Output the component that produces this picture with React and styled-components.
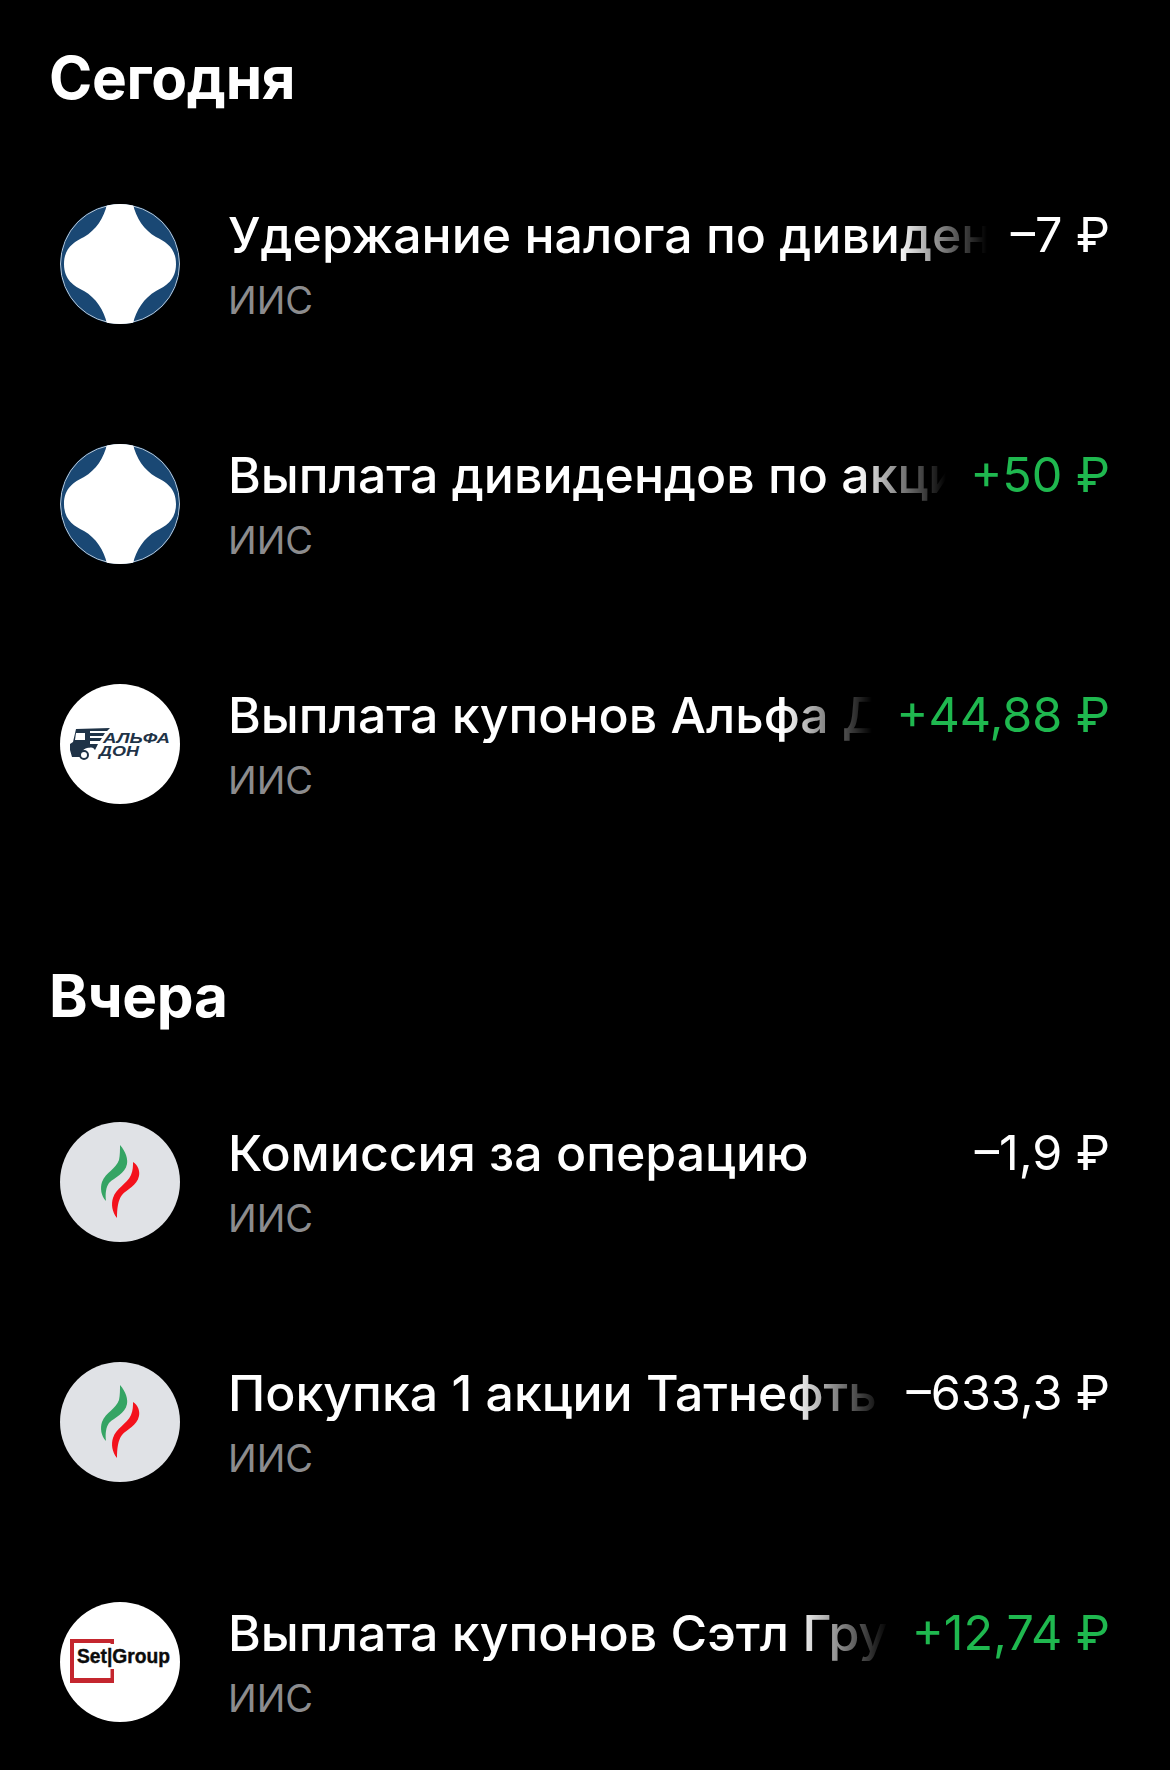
import React from "react";
import styled, { createGlobalStyle } from "styled-components";

const GlobalStyle = createGlobalStyle`
  html, body, #root {
    margin: 0;
    background: #000;
  }
  body {
    font-family: Inter, "Noto Sans", "Liberation Sans", sans-serif;
  }
`;

const Page = styled.div`
  width: 1170px;
  height: 1770px;
  overflow: hidden;
  background: #000;
  color: #fff;
  display: flex;
  flex-direction: column;
  padding-top: 42px;
  box-sizing: border-box;
`;

const Section = styled.section`
  display: flex;
  flex-direction: column;
  margin-bottom: 156px;
`;

const Heading = styled.h2`
  margin: 0 0 90px 49px;
  font-size: 58.5px;
  line-height: 72px;
  font-weight: 700;
  letter-spacing: -0.3px;
`;

const List = styled.div`
  display: flex;
  flex-direction: column;
  gap: 120px;
  padding: 0 60px;
`;

const Row = styled.div`
  display: flex;
  align-items: center;
  height: 120px;
`;

const Avatar = styled.div`
  width: 120px;
  height: 120px;
  flex-shrink: 0;
  border-radius: 50%;
  overflow: hidden;
  background: ${(p) => p.$bg};
  display: flex;
  align-items: center;
  justify-content: center;
`;

const Body = styled.div`
  flex: 1;
  min-width: 0;
  margin-left: 50px;
  padding-top: 2px;
  display: flex;
  flex-direction: column;
  gap: 13px;
`;

const TopLine = styled.div`
  display: flex;
  align-items: center;
  gap: 24px;
`;

const Title = styled.div`
  flex: 1;
  min-width: 0;
  margin-left: -2px;
  font-size: 50px;
  line-height: 56px;
  font-weight: 500;
  white-space: nowrap;
  overflow: hidden;
  mask-image: linear-gradient(to right, #000 calc(100% - 90px), transparent 100%);
`;

const Amount = styled.div`
  flex-shrink: 0;
  font-size: 48.5px;
  line-height: 56px;
  font-weight: 400;
  color: ${(p) => (p.$plus ? "#1fb84f" : "#fff")};
`;

const Account = styled.div`
  margin-left: -2px;
  font-size: 38px;
  line-height: 48px;
  color: #8c8c8e;
`;

const LogoSvg = styled.svg`
  display: block;
  width: 120px;
  height: 120px;
`;

const LogoText = styled.text`
  font-family: "Liberation Sans", sans-serif;
  font-weight: 700;
`;

function BankLogo() {
  return (
    <LogoSvg viewBox="0 0 120 120">
      <circle cx="60" cy="60" r="59.5" fill="#1a4874" stroke="#b9c6d3" strokeWidth="1" />
      <path
        d="M47 0 C44 14 36 26 24 33 C14 38 4 44 4 60 C4 76 14 82 24 87 C36 94 44 106 47 120 H73 C76 106 84 94 96 87 C106 82 116 76 116 60 C116 44 106 38 96 33 C84 26 76 14 73 0 Z"
        fill="#fff"
      />
    </LogoSvg>
  );
}

function AlfaLogo() {
  return (
    <LogoSvg viewBox="0 0 120 120">
      <path
        d="M16 45 L50 44 L47 47 H30 V49 H45 L43 52 H30 V54 H42 L40 57 H30 V60 H38 L35 66 C33 63 32 63 27 64 C23 65 20 69 20 73 H12 L10 66 V60 L13 58 Z"
        fill="#1f3347"
      />
      <path d="M16 49 H25 V56 H15 Z" fill="#fff" />
      <circle cx="24" cy="71" r="4" fill="#fff" stroke="#1f3347" strokeWidth="2" />
      <LogoText x="43" y="59" fontSize="14" fontStyle="italic" fill="#1f3347" textLength="67" lengthAdjust="spacingAndGlyphs">
        АЛЬФА
      </LogoText>
      <LogoText x="39" y="72" fontSize="15" fontStyle="italic" fill="#1f3347" textLength="40" lengthAdjust="spacingAndGlyphs">
        ДОН
      </LogoText>
    </LogoSvg>
  );
}

function TatneftLogo() {
  return (
    <LogoSvg viewBox="0 0 120 120">
      <path
        d="M60 23 C66 30 68 37 67 42 C65 52 55 55 49 61 C46 65 45 72 46 79 C41 74 40 66 42 60 C46 50 56 47 59 38 C60 33 60 28 60 23 Z"
        fill="#35a464"
      />
      <path
        d="M73 40 C78 43 80 49 79 54 C77 64 67 67 62 73 C58 78 57 87 57 96 C52 90 51 82 53 76 C56 66 67 62 71 53 C73 48 73 44 73 40 Z"
        fill="#f3121c"
      />
    </LogoSvg>
  );
}

function SetlLogo() {
  return (
    <LogoSvg viewBox="0 0 120 120">
      <path d="M10 37 H54 V42 H50.5 V41 H14 V76 H50.5 V67 H54 V81 H10 Z" fill="#c4262e" />
      <LogoText x="17" y="61" fontSize="20" fill="#0b0b0b" stroke="#0b0b0b" strokeWidth="0.4" textLength="93" lengthAdjust="spacingAndGlyphs">
        Set|Group
      </LogoText>
    </LogoSvg>
  );
}

const today = [
  { logo: <BankLogo />, bg: "#1a4874", title: "Удержание налога по дивидендам", amount: "–7 ₽" },
  { logo: <BankLogo />, bg: "#1a4874", title: "Выплата дивидендов по акциям", amount: "+50 ₽", plus: true },
  { logo: <AlfaLogo />, bg: "#fff", title: "Выплата купонов Альфа Дон", amount: "+44,88 ₽", plus: true },
];

const yesterday = [
  { logo: <TatneftLogo />, bg: "#e0e2e6", title: "Комиссия за операцию", amount: "–1,9 ₽" },
  { logo: <TatneftLogo />, bg: "#e0e2e6", title: "Покупка 1 акции Татнефть", amount: "–633,3 ₽" },
  { logo: <SetlLogo />, bg: "#fff", title: "Выплата купонов Сэтл Групп", amount: "+12,74 ₽", plus: true },
];

function Operation({ item }) {
  return (
    <Row>
      <Avatar $bg={item.bg}>{item.logo}</Avatar>
      <Body>
        <TopLine>
          <Title>{item.title}</Title>
          <Amount $plus={item.plus}>{item.amount}</Amount>
        </TopLine>
        <Account>ИИС</Account>
      </Body>
    </Row>
  );
}

const App = () => {
  return (
    <Page>
      <GlobalStyle />
      <Section>
        <Heading>Сегодня</Heading>
        <List>
          {today.map((item) => (
            <Operation key={item.title} item={item} />
          ))}
        </List>
      </Section>
      <Section>
        <Heading>Вчера</Heading>
        <List>
          {yesterday.map((item) => (
            <Operation key={item.title} item={item} />
          ))}
        </List>
      </Section>
    </Page>
  );
};

export default App;
